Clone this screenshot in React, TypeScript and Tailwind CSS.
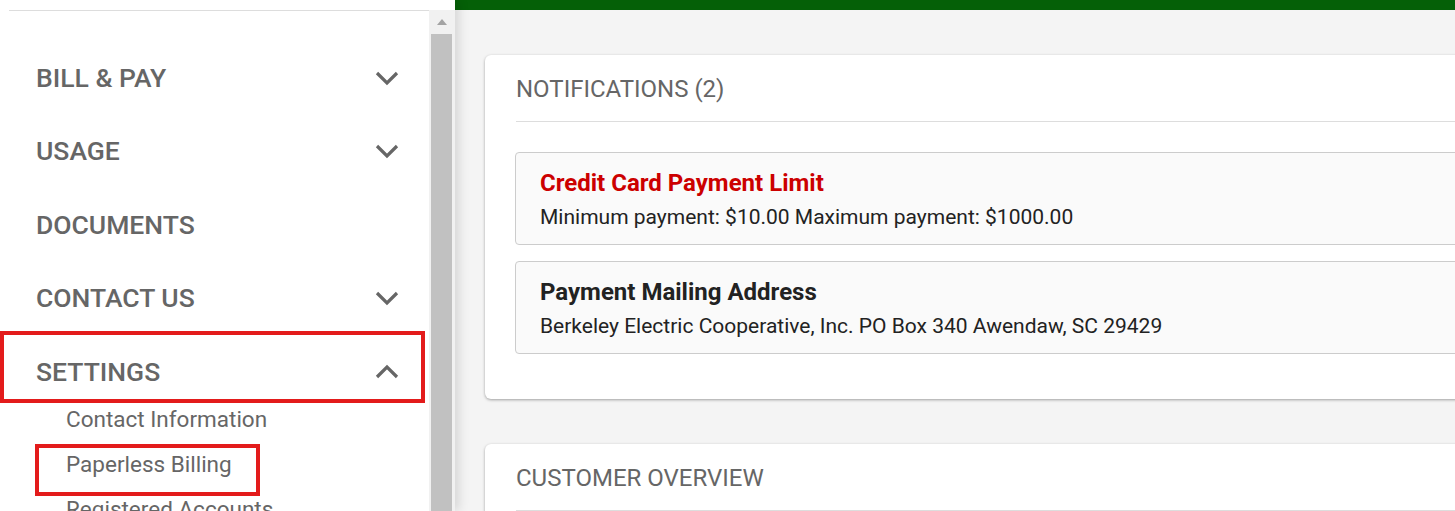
import React from 'react';

const font = { fontFamily: 'Roboto, "Liberation Sans", sans-serif' };

const Chevron: React.FC<{ up?: boolean }> = ({ up }) => (
    <svg width="24" height="16" viewBox="0 0 24 16" className="text-[#666]">
        <polyline
            points={up ? '2,13 12,3 22,13' : '2,3 12,13 22,3'}
            fill="none"
            stroke="currentColor"
            strokeWidth="3.2"
        />
    </svg>
);

const NavRow: React.FC<{ label: string; chevron?: 'down' | 'up'; marked?: boolean }> = ({ label, chevron, marked }) => (
    <div className="relative flex h-[73.5px] shrink-0 items-center justify-between pl-[27px] pr-[30px]">
        <span className="text-[26.5px] font-medium text-[#666]">{label}</span>
        {chevron && <Chevron up={chevron === 'up'} />}
        {marked && (
            <div className="pointer-events-none absolute left-[-9px] top-[-4px] h-[72px] w-[425px] border-[4px] border-[#e31b1b]" />
        )}
    </div>
);

const SubRow: React.FC<{ label: string; marked?: boolean }> = ({ label, marked }) => (
    <div className="relative flex h-[45px] shrink-0 items-center pl-[57px]">
        <span className="text-[22.5px] text-[#666]">{label}</span>
        {marked && (
            <div className="pointer-events-none absolute left-[26px] top-[1px] h-[52px] w-[225px] border-[4px] border-[#e31b1b]" />
        )}
    </div>
);

const Sidebar: React.FC = () => (
    <aside className="relative z-10 flex w-[455px] shrink-0 flex-col bg-white shadow-[4px_0_10px_rgba(0,0,0,0.12)]">
        <div className="h-[10px] shrink-0" />
        <div className="flex min-h-0 flex-1">
            <nav className="ml-[9px] w-[420px] shrink-0 border-t border-[#dddddd] pt-[30px]">
                <NavRow label="BILL & PAY" chevron="down" />
                <NavRow label="USAGE" chevron="down" />
                <NavRow label="DOCUMENTS" />
                <NavRow label="CONTACT US" chevron="down" />
                <NavRow label="SETTINGS" chevron="up" marked />
                <div className="-mt-[11px]">
                    <SubRow label="Contact Information" />
                    <SubRow label="Paperless Billing" marked />
                    <SubRow label="Registered Accounts" />
                </div>
            </nav>
            <div className="flex w-[26px] flex-col bg-[#f1f1f1] pl-[2px] pr-[3px]">
                <div className="flex h-[24px] shrink-0 items-center justify-center">
                    <div className="h-0 w-0 border-x-[5px] border-b-[6px] border-x-transparent border-b-[#a3a3a3]" />
                </div>
                <div className="flex-1 bg-[#c1c1c1]" />
            </div>
        </div>
    </aside>
);

const Notice: React.FC<{ title: string; body: string; red?: boolean }> = ({ title, body, red }) => (
    <div className="rounded-[4px] border border-[#cccccc] bg-[#fafafa] px-[24px] pb-[14px] pt-[17px]">
        <div className={`text-[24px] font-bold leading-[26px] ${red ? 'text-[#cc0000]' : 'text-[#222]'}`}>
            {title}
        </div>
        <div className="mt-[8px] text-[21px] leading-[26px] text-[#222]">{body}</div>
    </div>
);

const Card: React.FC<{ title: string; children?: React.ReactNode }> = ({ title, children }) => (
    <section className="-mr-[60px] shrink-0 rounded-[6px] bg-white pl-[31px] pr-[31px] shadow-[0_1px_3px_rgba(0,0,0,0.35)]">
        <h2 className="border-b border-[#dddddd] pb-[18px] pt-[20px] text-[24px] font-normal leading-[28px] text-[#666]">
            {title}
        </h2>
        {children}
    </section>
);

export default function App() {
    return (
        <div className="flex h-[511px] w-[1455px] overflow-hidden bg-white" style={font}>
            <Sidebar />
            <main className="flex min-w-0 flex-1 flex-col overflow-hidden bg-[#f4f4f4]">
                <div className="h-[10px] shrink-0 bg-[#056007]" />
                <div className="flex flex-col gap-[45px] pl-[30px] pt-[45px]">
                    <Card title="NOTIFICATIONS (2)">
                        <div className="-ml-[1px] flex flex-col gap-[16px] pb-[45px] pt-[30px]">
                            <Notice
                                red
                                title="Credit Card Payment Limit"
                                body="Minimum payment: $10.00 Maximum payment: $1000.00"
                            />
                            <Notice
                                title="Payment Mailing Address"
                                body="Berkeley Electric Cooperative, Inc. PO Box 340 Awendaw, SC 29429"
                            />
                        </div>
                    </Card>
                    <Card title="CUSTOMER OVERVIEW">
                        <div className="h-[60px]" />
                    </Card>
                </div>
            </main>
        </div>
    );
}
